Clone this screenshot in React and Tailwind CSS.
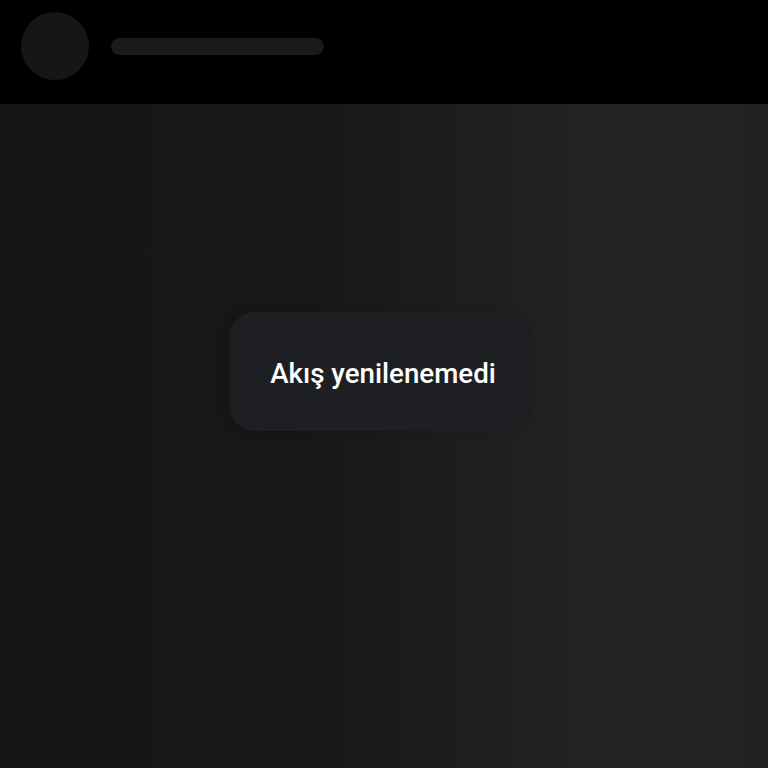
export default function App() {
  return (
    <div className="w-[768px] h-[768px] flex flex-col bg-black overflow-hidden font-['Roboto',sans-serif]">
      <div className="h-[104px] shrink-0 bg-black flex items-center pl-[21px] pb-[12px] gap-[22px]">
        <div className="w-[68px] h-[68px] rounded-full bg-[#161616]" />
        <div className="w-[213px] h-[17px] rounded-full bg-[#1a1a1a]" />
      </div>
      <div className="flex-1 flex items-start justify-center pt-[208px] bg-[linear-gradient(to_right,#161616_0%,#171717_38%,#1c1c1c_55%,#222222_72%,#242424_82%,#222222_100%)]">
        <div className="w-[301px] h-[119px] mr-[10px] rounded-[26px] bg-[#1e1f22] shadow-[0_0_8px_rgba(0,0,0,0.2)] flex items-center justify-center pt-[5px] pl-[8px]">
          <span className="text-white text-[27.7px] font-medium">Akış yenilenemedi</span>
        </div>
      </div>
    </div>
  );
}
